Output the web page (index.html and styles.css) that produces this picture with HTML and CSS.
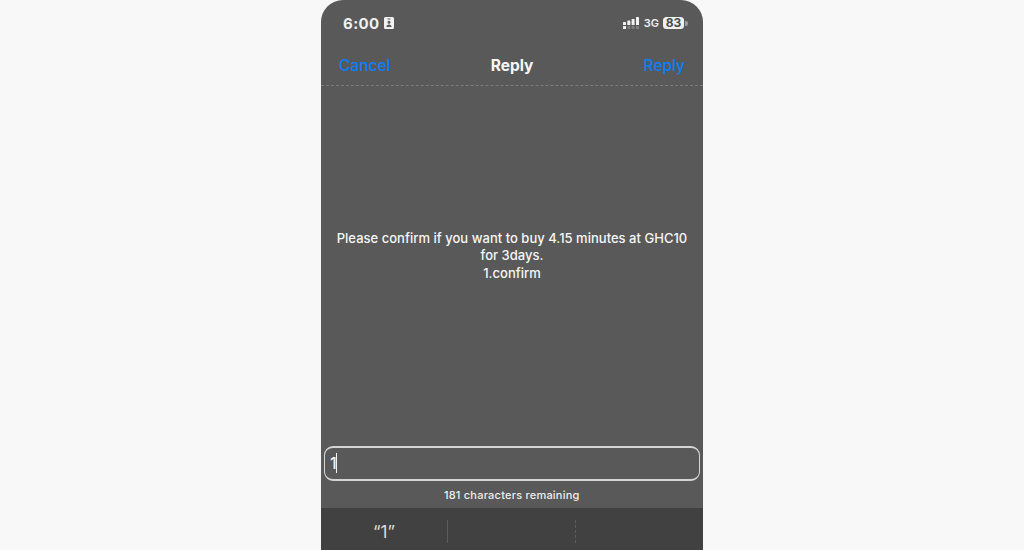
FILE: index.html
```html
<!DOCTYPE html>
<html lang="en">
<head>
<meta charset="utf-8">
<title>Reply</title>
<link rel="stylesheet" href="styles.css">
</head>
<body>
<main class="phone">
  <header class="status">
    <div class="status-left">
      <span class="time">6:00</span>
      <svg class="id-icon" viewBox="0 0 10 12" width="10" height="12"><path fill="#f2f2f2" fill-rule="evenodd" d="M1.5 0h7A1.5 1.5 0 0 1 10 1.500v9A1.500 1.500 0 0 1 8.500 12h-7A1.500 1.500 0 0 1 0 10.500v-9A1.500 1.500 0 0 1 1.500 0ZM3.500 1.500v1h3v-1ZM5 3.800a1.500 1.500 0 1 0 0 3 1.500 1.500 0 0 0 0-3ZM2.400 10h5.200c0-1.600-1-2.600-2.600-2.600S2.400 8.400 2.400 10Z"/></svg>
    </div>
    <div class="status-right">
      <svg class="signal" viewBox="0 0 16 12" width="16" height="12">
        <g fill="#f2f2f2"><rect x="0" y="5" width="3" height="3" rx=".6"/><rect x="4.300" y="3.500" width="3" height="4.500" rx=".6"/><rect x="8.600" y="2" width="3" height="6" rx=".6"/><rect x="13" y="0" width="3" height="8" rx=".6"/><rect x="0" y="9" width="3" height="3" rx=".6"/></g>
        <g fill="#7d7d7d"><rect x="4.300" y="9" width="3" height="3" rx=".6"/><rect x="8.600" y="9" width="3" height="3" rx=".6"/><rect x="13" y="9" width="3" height="3" rx=".6"/></g>
      </svg>
      <span class="network">3G</span>
      <span class="battery"><span class="battery-level">83</span><span class="battery-cap"></span></span>
    </div>
  </header>
  <nav class="nav">
    <span class="nav-link">Cancel</span>
    <span class="nav-title">Reply</span>
    <span class="nav-link nav-link-end">Reply</span>
  </nav>
  <section class="message">
    <p>Please confirm if you want to buy 4.15 minutes at GHC10<br>for 3days.<br>1.confirm</p>
  </section>
  <div class="input-wrap">
    <div class="input"><span class="input-text">1</span><span class="caret"></span></div>
    <div class="remaining">181 characters remaining</div>
  </div>
  <div class="suggestions">
    <div class="suggestion">“1”</div>
    <div class="suggestion divided"></div>
    <div class="suggestion dotted"></div>
  </div>
</main>
</body>
</html>
```
FILE: styles.css
```css
* { box-sizing: border-box; }
html, body { height: 100%; }
body {
  margin: 0;
  background: #f8f8f8;
  display: flex;
  justify-content: center;
  overflow: hidden;
  font-family: Inter, "Liberation Sans", sans-serif;
  color: #f0f0f0;
}
.phone {
  width: 382px;
  height: 550px;
  background: #595959;
  border-radius: 22px 22px 0 0;
  display: flex;
  flex-direction: column;
  overflow: hidden;
}
.status {
  height: 46px;
  padding: 0 15px 0 22px;
  display: flex;
  justify-content: space-between;
  align-items: center;
}
.status-left { display: flex; align-items: center; gap: 4px; }
.time { font-size: 15px; font-weight: 700; letter-spacing: .4px; }
.id-icon { display: block; }
.status-right { display: flex; align-items: center; gap: 5px; }
.signal { display: block; }
.network { font-size: 11px; font-weight: 600; margin-right: -1px; }
.battery { display: flex; align-items: center; gap: 1px; }
.battery-level {
  width: 21px;
  height: 12px;
  background: #f0f0f0;
  color: #4a4a4a;
  border-radius: 3.5px;
  font-size: 12px;
  font-weight: 700;
  line-height: 12px;
  text-align: center;
}
.battery-cap { width: 3px; height: 5px; background: #9a9a9a; border-radius: 0 2px 2px 0; }
.nav {
  height: 40px;
  padding: 0 18px 0 18px;
  display: grid;
  grid-template-columns: 1fr auto 1fr;
  align-items: center;
  border-bottom: 1px dashed #7c7c7c;
}
.nav-link { font-size: 15.500px; font-weight: 500; color: #0a7fff; }
.nav-link-end { text-align: right; }
.nav-title { font-size: 15.500px; font-weight: 700; color: #f6f6f6; }
.message {
  flex: 1;
  display: flex;
  flex-direction: column;
  justify-content: center;
  text-align: center;
  padding-bottom: 20px;
}
.message p {
  margin: 0;
  font-size: 13px;
  font-weight: 500;
  letter-spacing: .02px;
  line-height: 17.500px;
  color: #f6f6f6;
}
.input-wrap { padding: 0 3.500px 0 3px; }
.input {
  height: 35px;
  border: 1.500px solid #d4d4d4;
  border-top-width: 2px;
  border-bottom-width: 2px;
  border-radius: 9px;
  padding-left: 5px;
  display: flex;
  align-items: center;
}
.input-text { font-size: 16px; font-weight: 500; line-height: 20px; color: #f0f0f0; }
.caret { width: 1.500px; height: 20px; background: #f4f4f4; margin-left: -1px; }
.remaining {
  height: 27.500px;
  padding-top: 1px;
  display: flex;
  align-items: center;
  justify-content: center;
  font-size: 11px;
  font-weight: 500;
  letter-spacing: .22px;
  color: #eeeeee;
}
.suggestions {
  height: 42px;
  background: #414141;
  display: grid;
  grid-template-columns: 126px 128px 128px;
}
.suggestion {
  margin-top: 12px;
  height: 23px;
  display: flex;
  align-items: center;
  justify-content: center;
  font-size: 17px;
  color: #dcdcdc;
}
.divided { border-left: 1px solid #5c5c5c; }
.dotted { border-left: 1px dashed #5c5c5c; }
```
